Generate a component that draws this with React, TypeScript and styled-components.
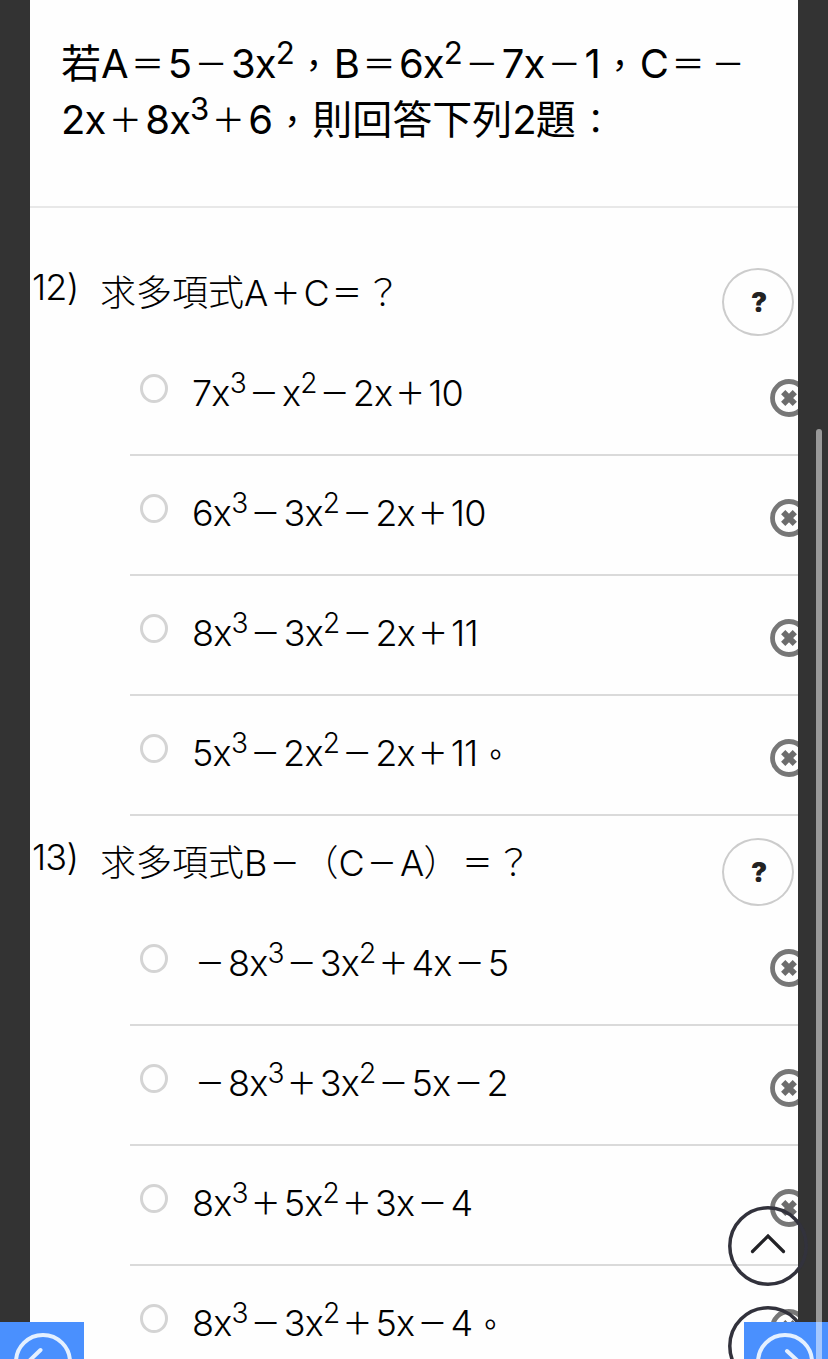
import React from "react";
import styled, { createGlobalStyle } from "styled-components";

const Global = createGlobalStyle`
  * { box-sizing: border-box; }
  html, body { margin: 0; background: #333; overflow: hidden; }
  body { font-family: Inter, "Noto Sans CJK TC", sans-serif; color: #000; }
`;

const Screen = styled.div`
  position: relative;
  width: 828px;
  height: 1359px;
  overflow: hidden;
  background: #333;
  padding: 0 30px;
`;

const Sheet = styled.main`
  height: 1359px;
  background: #fefefe;
  overflow: hidden;
`;

const Intro = styled.header`
  height: 208px;
  padding: 33px 0 0 31px;
  border-bottom: 2px solid #e8e8e8;
  margin-bottom: 38px;
`;

const Line = styled.div<{ $size: number; $weight: number; $tight: number }>`
  display: flex;
  align-items: baseline;
  white-space: nowrap;
  height: 56px;
  line-height: 56px;
  font-size: ${(p) => p.$size}px;
  font-weight: ${(p) => p.$weight};
  letter-spacing: ${(p) => p.$tight}px;

  &::before {
    content: "\\200b";
    width: 0;
    font-family: "Noto Sans CJK TC", sans-serif;
  }
`;

const Wide = styled.span`
  width: 1em;
  text-align: center;
  letter-spacing: 0;
  font-family: "Noto Sans CJK TC", sans-serif;
`;

const Sign = styled(Wide)`
  width: calc(1em / 0.83);
  font-size: 0.83em;
  font-weight: 400;
  transform: translateY(-0.06em);
`;

const Stop = styled(Wide)`
  font-size: 0.86em;
  width: calc(1em / 0.86);
  font-weight: 400;
`;

const Power = styled.span`
  font-size: 0.78em;
  line-height: 1;
  transform: translateY(-0.46em);
`;

const Question = styled.section`
  display: flex;
  flex-direction: column;
`;

const Prompt = styled.div`
  display: flex;
  height: 90px;
  padding-right: 4px;
`;

const Num = styled.div`
  width: 70px;
  padding: 10px 0 0 2px;
`;

const Title = styled.div`
  flex: 1;
  padding-top: 16px;
`;

const Help = styled.button`
  width: 72px;
  height: 68px;
  margin: 22px 0 0;
  padding: 2px 0 0 2px;
  border: 2px solid #ccc;
  border-radius: 50%;
  background: transparent;
  color: #222;
  font: 900 27px/60px Inter, sans-serif;
`;

const Option = styled.label`
  display: flex;
  height: 120px;
  margin-left: 100px;
  width: 700px;
  border-bottom: 2px solid #dadada;
`;

const Radio = styled.span`
  flex: none;
  width: 28px;
  height: 29px;
  margin: 38px 24px 0 10px;
  border: 3px solid #d4d4d4;
  border-radius: 50%;
`;

const Answer = styled.div`
  flex: 1;
  padding-top: 26px;
`;

const Strike = styled.svg`
  flex: none;
  width: 38px;
  height: 38px;
  margin: 43px 22px 0 0;
`;

const FloatButton = styled.svg<{ $top: number }>`
  position: absolute;
  left: 728px;
  top: ${(p) => p.$top}px;
  width: 80px;
  height: 80px;
`;

const Nav = styled.div<{ $right?: boolean }>`
  position: absolute;
  top: 1322px;
  ${(p) => (p.$right ? "right: 0;" : "left: 0;")}
  width: 84px;
  height: 80px;
  background: #4a90fe;
`;

const Thumb = styled.div`
  position: absolute;
  left: 816px;
  top: 429px;
  width: 6px;
  height: 940px;
  border-radius: 3px;
  background: rgba(255, 255, 255, 0.5);
`;

function MathText({ text, size, weight, tight }: { text: string; size: number; weight: number; tight: number }) {
  return (
    <Line $size={size} $weight={weight} $tight={tight}>
      {(text.match(/\^\d|[A-Za-z0-9)]+|./g) || []).map((t, i) => {
        if (t[0] === "^") return <Power key={i}>{t[1]}</Power>;
        if (/[A-Za-z0-9)]/.test(t)) return <span key={i}>{t}</span>;
        if (/[＋－＝]/.test(t)) return <Sign key={i}>{t}</Sign>;
        if (/[。，：]/.test(t)) return <Stop key={i}>{t}</Stop>;
        return <Wide key={i}>{t}</Wide>;
      })}
    </Line>
  );
}

const Small = ({ text }: { text: string }) => <MathText text={text} size={36} weight={300} tight={-0.8} />;
const Large = ({ text }: { text: string }) => <MathText text={text} size={40} weight={370} tight={-0.95} />;

const questions = [
  { n: "12)", title: "求多項式A＋C＝？", options: ["7x^3－x^2－2x＋10", "6x^3－3x^2－2x＋10", "8x^3－3x^2－2x＋11", "5x^3－2x^2－2x＋11。"] },
  { n: "13)", title: "求多項式B－（C－A）＝？", options: ["－8x^3－3x^2＋4x－5", "－8x^3＋3x^2－5x－2", "8x^3＋5x^2＋3x－4", "8x^3－3x^2＋5x－4。"] },
];

export default function App() {
  return (
    <Screen>
      <Global />
      <Sheet>
        <Intro>
          <Large text="若A＝5－3x^2，B＝6x^2－7x－1，C＝－" />
          <Large text="2x＋8x^3＋6，則回答下列2題：" />
        </Intro>
        {questions.map((q) => (
          <Question key={q.n}>
            <Prompt>
              <Num><Small text={q.n} /></Num>
              <Title><Small text={q.title} /></Title>
              <Help>?</Help>
            </Prompt>
            {q.options.map((o) => (
              <Option key={o}>
                <Radio />
                <Answer><Small text={o} /></Answer>
                <Strike viewBox="0 0 38 38">
                  <circle cx="19" cy="19" r="16.5" fill="none" stroke="#777" strokeWidth="4.8" />
                  <path d="M13.200 13.200L24.800 24.800M24.800 13.200L13.200 24.800" stroke="#6c6c6c" strokeWidth="6" />
                </Strike>
              </Option>
            ))}
          </Question>
        ))}
      </Sheet>
      {[1206, 1306].map((top) => (
        <FloatButton key={top} $top={top} viewBox="0 0 80 80">
          <circle cx="40" cy="40" r="38.2" fill="none" stroke="#32323c" strokeWidth="3.5" />
          <path d="M24.500 45.500L40 30L55.500 45.500" fill="none" stroke="#222226" strokeWidth="3.2" strokeLinecap="round" />
        </FloatButton>
      ))}
      <Nav>
        <svg width="84" height="80" fill="none" stroke="#e4f0ff" strokeWidth="4" strokeLinecap="round">
          <circle cx="43" cy="40" r="27" />
          <path d="M40.500 28L27 41L40.500 54" />
        </svg>
      </Nav>
      <Nav $right>
        <svg width="84" height="80" fill="none" stroke="#e4f0ff" strokeWidth="4" strokeLinecap="round">
          <circle cx="41" cy="40" r="27" />
          <path d="M43 29L56 41L43 53" />
        </svg>
      </Nav>
      <Thumb />
    </Screen>
  );
}
